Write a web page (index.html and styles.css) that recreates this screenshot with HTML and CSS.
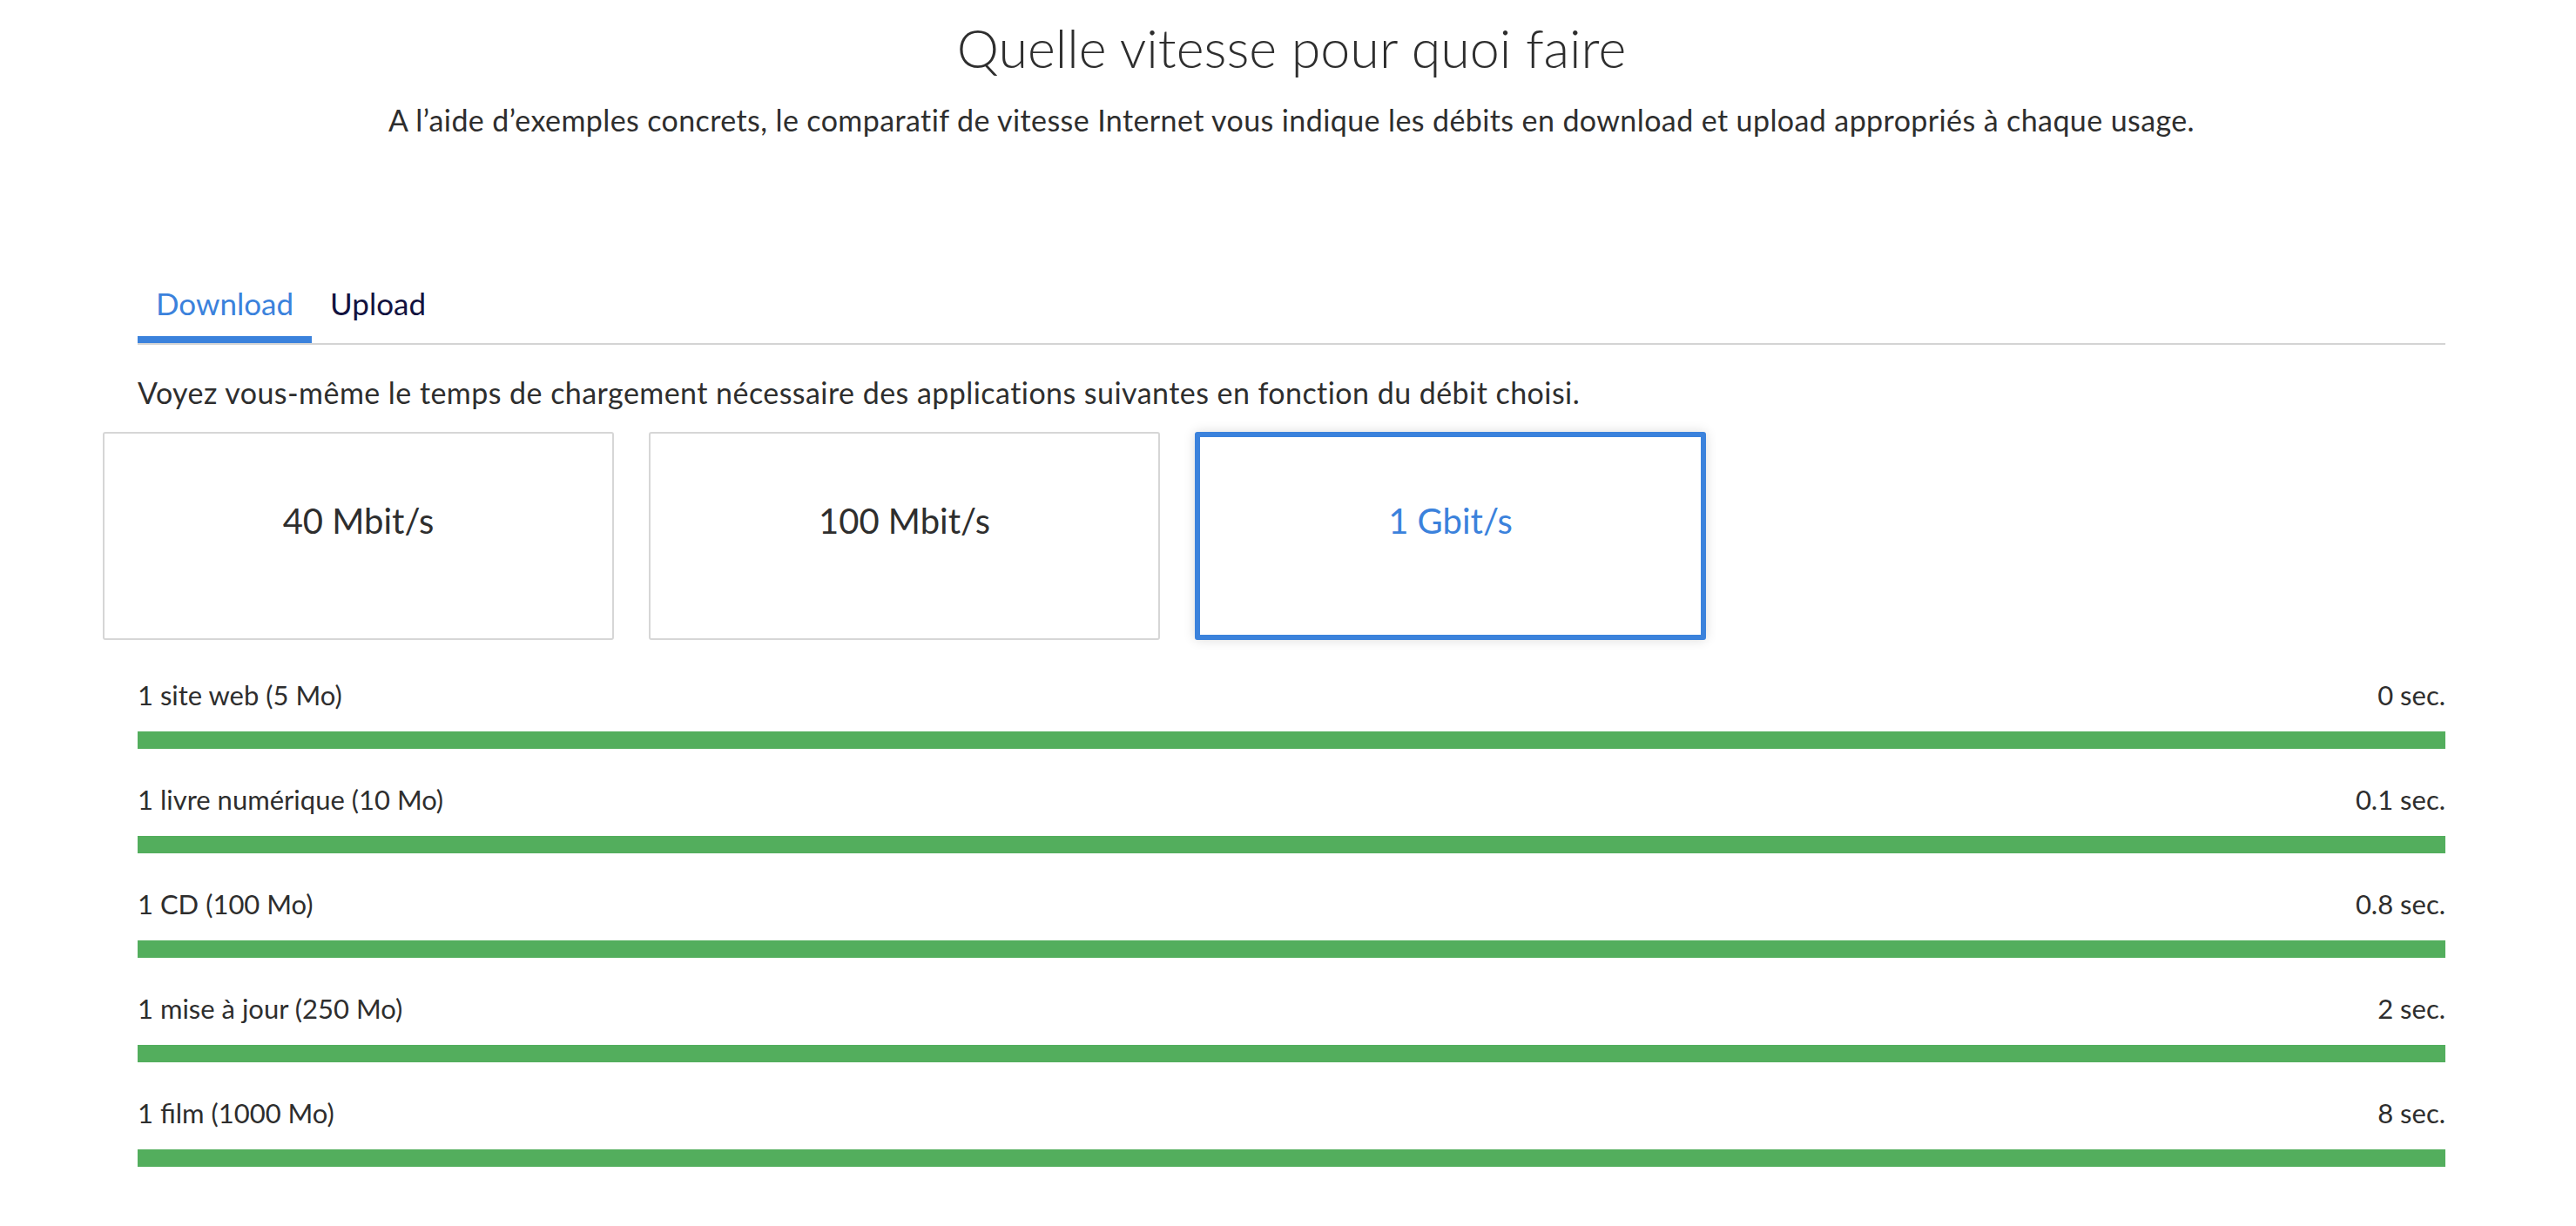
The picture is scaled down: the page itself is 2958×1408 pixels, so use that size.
FILE: index.html
```html
<!DOCTYPE html>
<html lang="fr">
<head>
<meta charset="utf-8">
<title>Quelle vitesse pour quoi faire</title>
<link rel="stylesheet" href="styles.css">
</head>
<body>
<main class="page">
  <header class="intro">
    <h1 class="title">Quelle vitesse pour quoi faire</h1>
    <p class="lead">A l’aide d’exemples concrets, le comparatif de vitesse Internet vous indique les débits en download et upload appropriés à chaque usage.</p>
  </header>

  <section class="speed">
    <nav class="tabs">
      <button class="tab tab--active">Download</button>
      <button class="tab">Upload</button>
    </nav>

    <p class="hint">Voyez vous-même le temps de chargement nécessaire des applications suivantes en fonction du débit choisi.</p>

    <div class="cards">
      <div class="card">40 Mbit/s</div>
      <div class="card">100 Mbit/s</div>
      <div class="card card--active">1 Gbit/s</div>
    </div>

    <ul class="rows">
      <li class="row">
        <div class="row-head"><span>1 site web (5 Mo)</span><span>0 sec.</span></div>
        <div class="bar"><div class="bar-fill" style="width:100%"></div></div>
      </li>
      <li class="row">
        <div class="row-head"><span>1 livre numérique (10 Mo)</span><span>0.1 sec.</span></div>
        <div class="bar"><div class="bar-fill" style="width:100%"></div></div>
      </li>
      <li class="row">
        <div class="row-head"><span>1 CD (100 Mo)</span><span>0.8 sec.</span></div>
        <div class="bar"><div class="bar-fill" style="width:100%"></div></div>
      </li>
      <li class="row">
        <div class="row-head"><span>1 mise à jour (250 Mo)</span><span>2 sec.</span></div>
        <div class="bar"><div class="bar-fill" style="width:100%"></div></div>
      </li>
      <li class="row">
        <div class="row-head"><span>1 film (1000 Mo)</span><span>8 sec.</span></div>
        <div class="bar"><div class="bar-fill" style="width:100%"></div></div>
      </li>
    </ul>
  </section>
</main>
</body>
</html>
```

FILE: styles.css
```css
* {
  box-sizing: border-box;
}

html, body {
  margin: 0;
  padding: 0;
  background: #ffffff;
}

body {
  font-family: Lato, "Open Sans", "Noto Sans", sans-serif;
  color: #2e2e2e;
}

.page {
  width: 2650px;
  margin-left: 158px;
}

.intro {
  text-align: center;
}

.title {
  margin: 18px 0 0;
  font-size: 61px;
  line-height: 73px;
  font-weight: 300;
  color: #2e2e2e;
}

.lead {
  margin: 27px 0 0;
  font-size: 34px;
  line-height: 40px;
  letter-spacing: 0.4px;
  color: #2e2e2e;
}

.tabs {
  display: flex;
  margin-top: 168px;
  border-bottom: 2px solid #d4d4d4;
}

.tab {
  font-family: inherit;
  font-size: 35px;
  line-height: 44px;
  padding: 0 21px 16px;
  margin: 0;
  background: none;
  border: none;
  border-bottom: 8px solid transparent;
  color: #12123f;
  cursor: pointer;
}

.tab--active {
  color: #3b82dc;
  border-bottom-color: #3b82dc;
}

.hint {
  margin: 35px 0 0;
  font-size: 34px;
  line-height: 40px;
  letter-spacing: 0.45px;
  color: #2e2e2e;
}

.cards {
  display: flex;
  gap: 40px;
  margin: 25px 0 0 -40px;
}

.card {
  width: 587px;
  height: 239px;
  border: 2px solid #d6d6d6;
  border-radius: 3px;
  display: flex;
  align-items: center;
  justify-content: center;
  padding-bottom: 36px;
  font-size: 40px;
  color: #2e2e2e;
  background: #fff;
}

.card--active {
  border: 6px solid #3b82dc;
  color: #3b82dc;
  box-shadow: 0 0 14px rgba(0, 0, 0, 0.14);
}

.rows {
  list-style: none;
  margin: 45px 0 0;
  padding: 0;
}

.row {
  margin-bottom: 40px;
}

.row-head {
  display: flex;
  justify-content: space-between;
  font-size: 31px;
  line-height: 37px;
  color: #2e2e2e;
}

.bar {
  margin-top: 23px;
  height: 20px;
  background: #e6e6e6;
}

.bar-fill {
  height: 100%;
  background: #53ae5d;
}
```
